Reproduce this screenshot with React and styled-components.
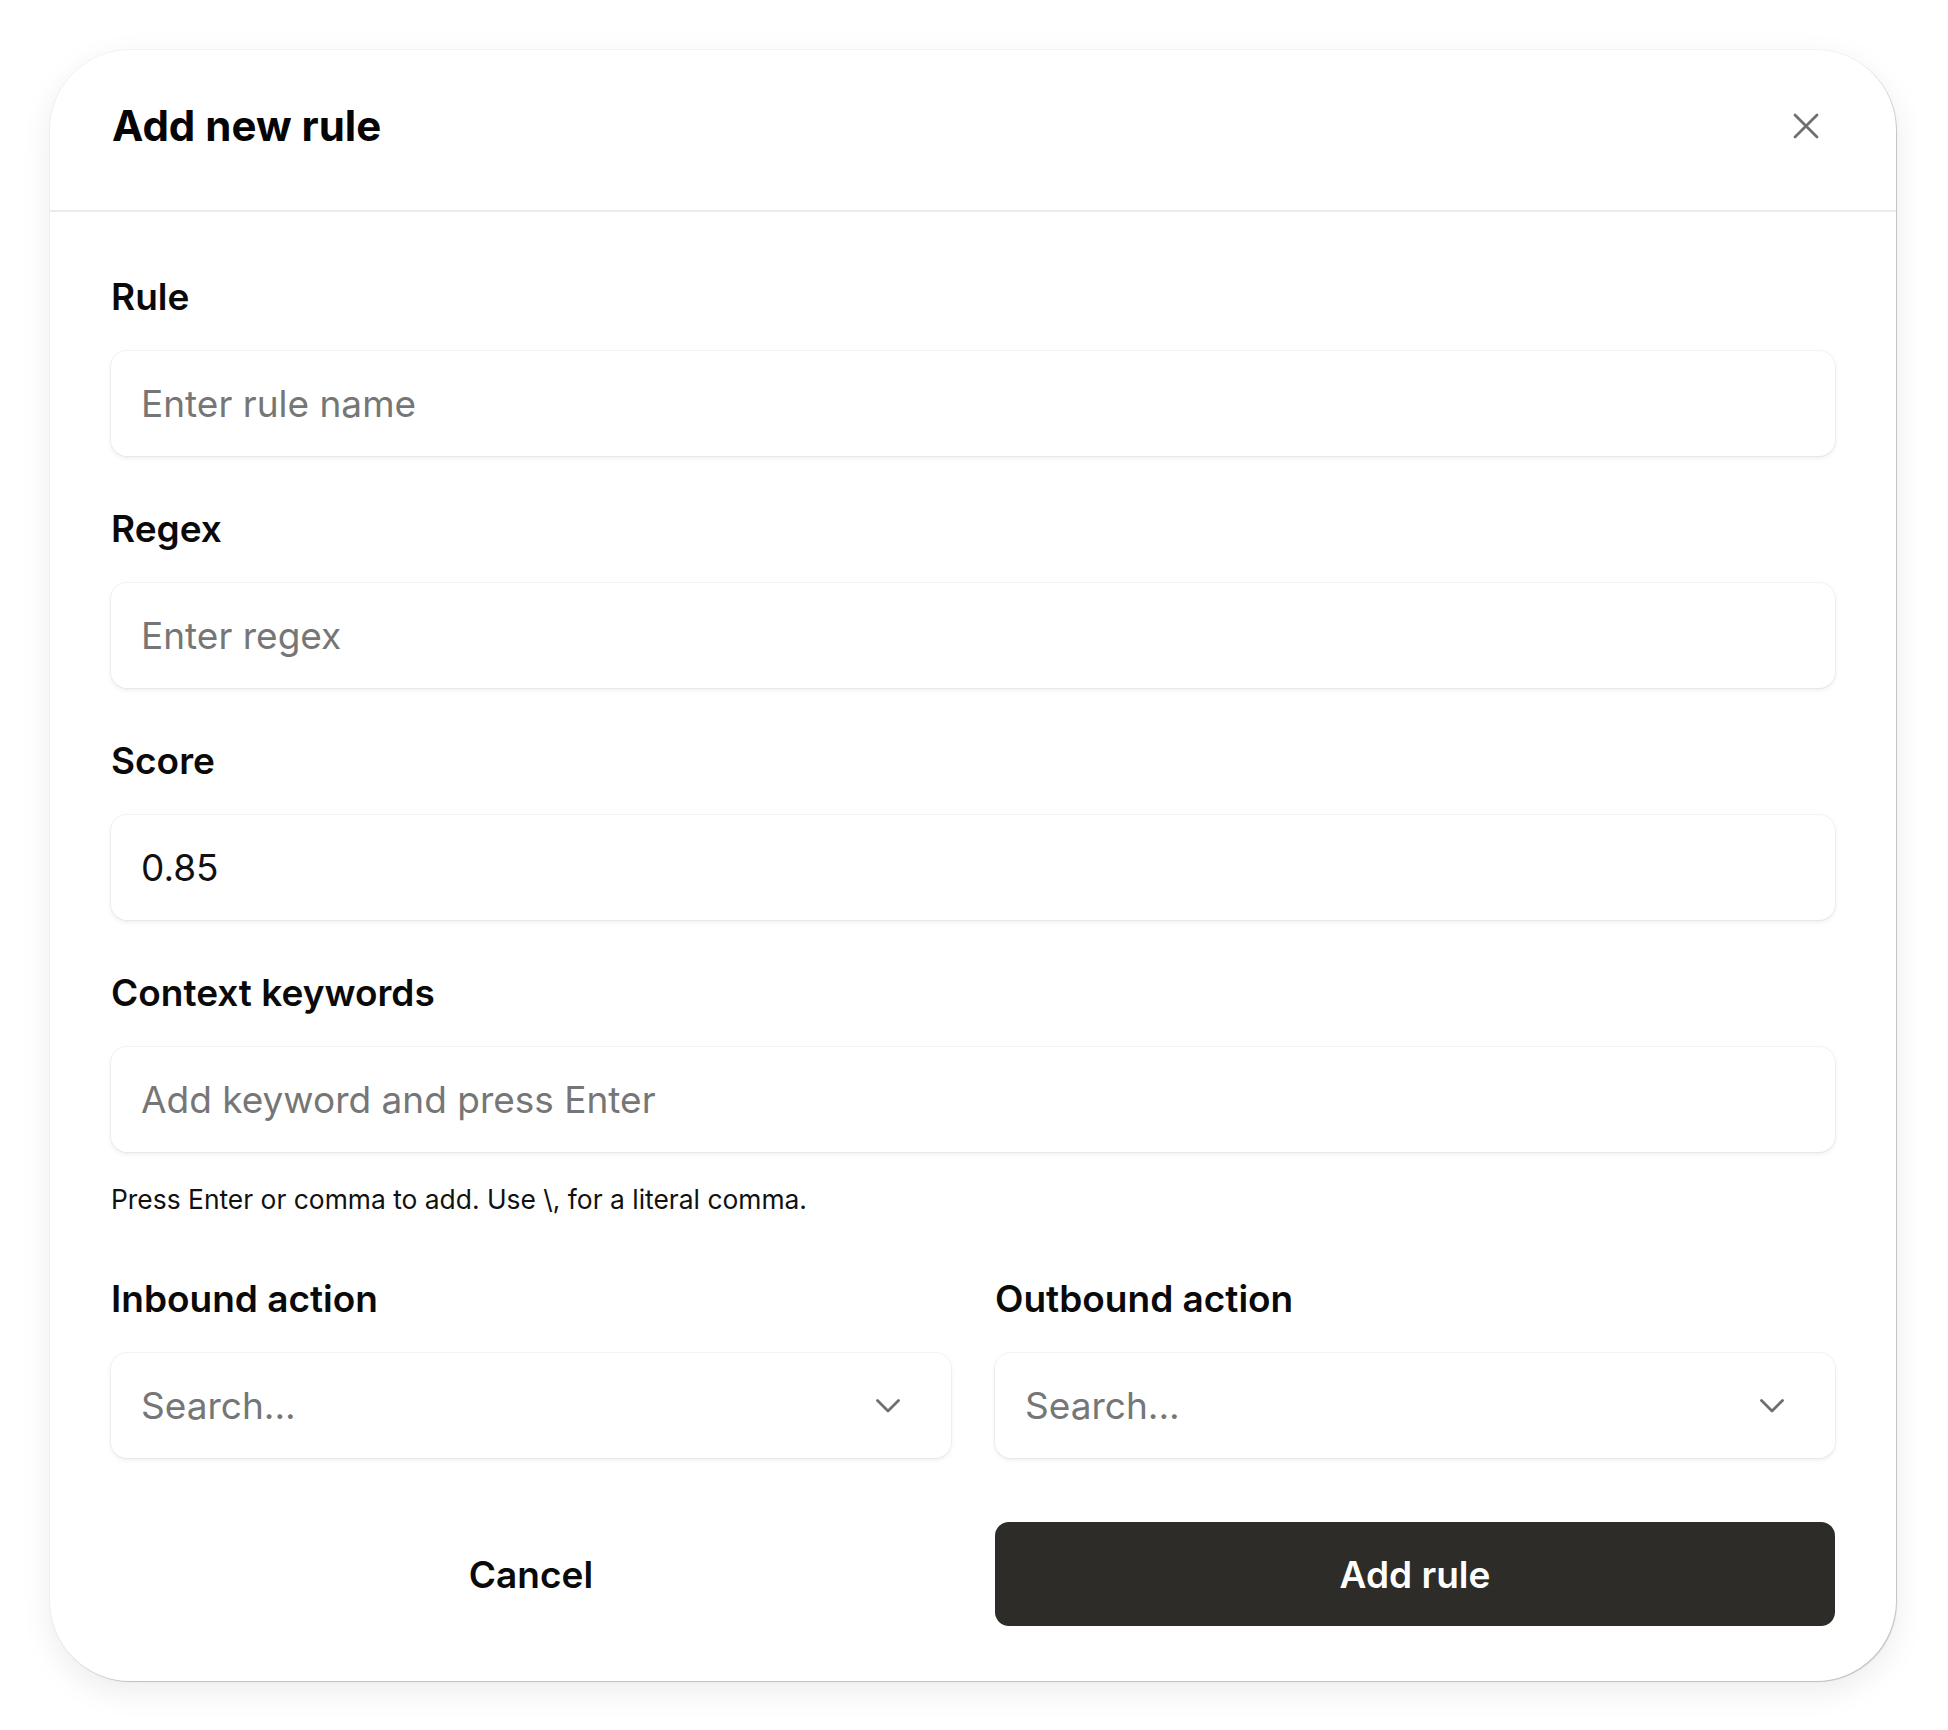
import React from 'react';
import styled, { createGlobalStyle } from 'styled-components';

const GlobalStyle = createGlobalStyle`
  * { box-sizing: border-box; }
  body {
    margin: 0;
    background: #ffffff;
    font-family: Inter, "Noto Sans", "Liberation Sans", sans-serif;
    color: #0a0a0a;
  }
`;

const Page = styled.div`
  padding: 50px 52px 49px 50px;
`;

const Card = styled.div`
  background: #ffffff;
  border-radius: 80px;
  box-shadow: 0 0 0 1px rgba(0, 0, 0, 0.03), 1px 1px 1px rgba(0, 0, 0, 0.18),
    0 10px 32px rgba(0, 0, 0, 0.08);
  overflow: hidden;
`;

const Header = styled.div`
  height: 162px;
  padding: 0 61px 8px 62px;
  display: flex;
  align-items: center;
  justify-content: space-between;
  border-bottom: 2px solid #ebebeb;
`;

const Title = styled.h2`
  margin: 0;
  font-size: 42px;
  font-weight: 700;
  line-height: 56px;
  color: #050505;
`;

const CloseButton = styled.button`
  width: 58px;
  height: 58px;
  border: none;
  background: transparent;
  padding: 0;
  display: flex;
  align-items: center;
  justify-content: center;
  color: #6f6f6f;
  cursor: pointer;
`;

const Body = styled.div`
  padding: 61px 61px 55px 61px;
  display: flex;
  flex-direction: column;
`;

const Field = styled.div`
  display: flex;
  flex-direction: column;
  margin-bottom: ${(p) => p.$gap ?? 49}px;
`;

const Label = styled.label`
  font-size: 37px;
  font-weight: 600;
  line-height: 48px;
  margin-bottom: 30px;
  color: #0a0a0a;
`;

const Input = styled.input`
  height: 105px;
  width: 100%;
  border: none;
  outline: none;
  border-radius: 16px;
  background: #ffffff;
  padding: 0 30px;
  font-family: inherit;
  font-size: 37px;
  color: #111111;
  box-shadow: 0 0 0 1px rgba(0, 0, 0, 0.035), 0 2px 5px rgba(0, 0, 0, 0.08);

  &::placeholder {
    color: #767676;
  }
`;

const Help = styled.p`
  margin: 29px 0 0 0;
  font-size: 26.4px;
  line-height: 36px;
  color: #111111;
`;

const TwoCol = styled.div`
  display: grid;
  grid-template-columns: 1fr 1fr;
  gap: 44px;
`;

const SelectBox = styled.div`
  height: 105px;
  border-radius: 16px;
  background: #ffffff;
  box-shadow: 0 0 0 1px rgba(0, 0, 0, 0.035), 0 2px 5px rgba(0, 0, 0, 0.08);
  display: flex;
  align-items: center;
  padding: 0 51px 0 30px;
  color: #6f6f6f;
`;

const SelectInput = styled.input`
  flex: 1;
  min-width: 0;
  border: none;
  outline: none;
  background: transparent;
  padding: 0;
  font-family: inherit;
  font-size: 37px;
  color: #111111;

  &::placeholder {
    color: #767676;
  }
`;

const Actions = styled(TwoCol)`
  margin-top: 64px;
`;

const Button = styled.button`
  height: 104px;
  border: none;
  border-radius: 14px;
  font-family: inherit;
  font-size: 37px;
  font-weight: 600;
  cursor: pointer;
  background: ${(p) => (p.$primary ? '#2d2c28' : 'transparent')};
  color: ${(p) => (p.$primary ? '#ffffff' : '#0a0a0a')};
`;

const CloseIcon = () => (
  <svg width="26" height="26" viewBox="0 0 26 26" fill="none">
    <path d="M2 2L24 24M24 2L2 24" stroke="currentColor" strokeWidth="2.8" strokeLinecap="round" />
  </svg>
);

const Chevron = () => (
  <svg width="24" height="14" viewBox="0 0 24 14" fill="none">
    <path d="M1.5 1.5L12 12L22.5 1.5" stroke="currentColor" strokeWidth="2.8" strokeLinecap="round" strokeLinejoin="round" />
  </svg>
);

const Select = ({ label }) => (
  <Field $gap={0}>
    <Label>{label}</Label>
    <SelectBox>
      <SelectInput placeholder="Search..." />
      <Chevron />
    </SelectBox>
  </Field>
);

export default function App() {
  return (
    <Page>
      <GlobalStyle />
      <Card>
        <Header>
          <Title>Add new rule</Title>
          <CloseButton aria-label="Close">
            <CloseIcon />
          </CloseButton>
        </Header>
        <Body>
          <Field>
            <Label>Rule</Label>
            <Input placeholder="Enter rule name" />
          </Field>
          <Field>
            <Label>Regex</Label>
            <Input placeholder="Enter regex" />
          </Field>
          <Field>
            <Label>Score</Label>
            <Input defaultValue="0.85" />
          </Field>
          <Field $gap={58}>
            <Label>Context keywords</Label>
            <Input placeholder="Add keyword and press Enter" />
            <Help>Press Enter or comma to add. Use \, for a literal comma.</Help>
          </Field>
          <TwoCol>
            <Select label="Inbound action" />
            <Select label="Outbound action" />
          </TwoCol>
          <Actions>
            <Button>Cancel</Button>
            <Button $primary>Add rule</Button>
          </Actions>
        </Body>
      </Card>
    </Page>
  );
}
